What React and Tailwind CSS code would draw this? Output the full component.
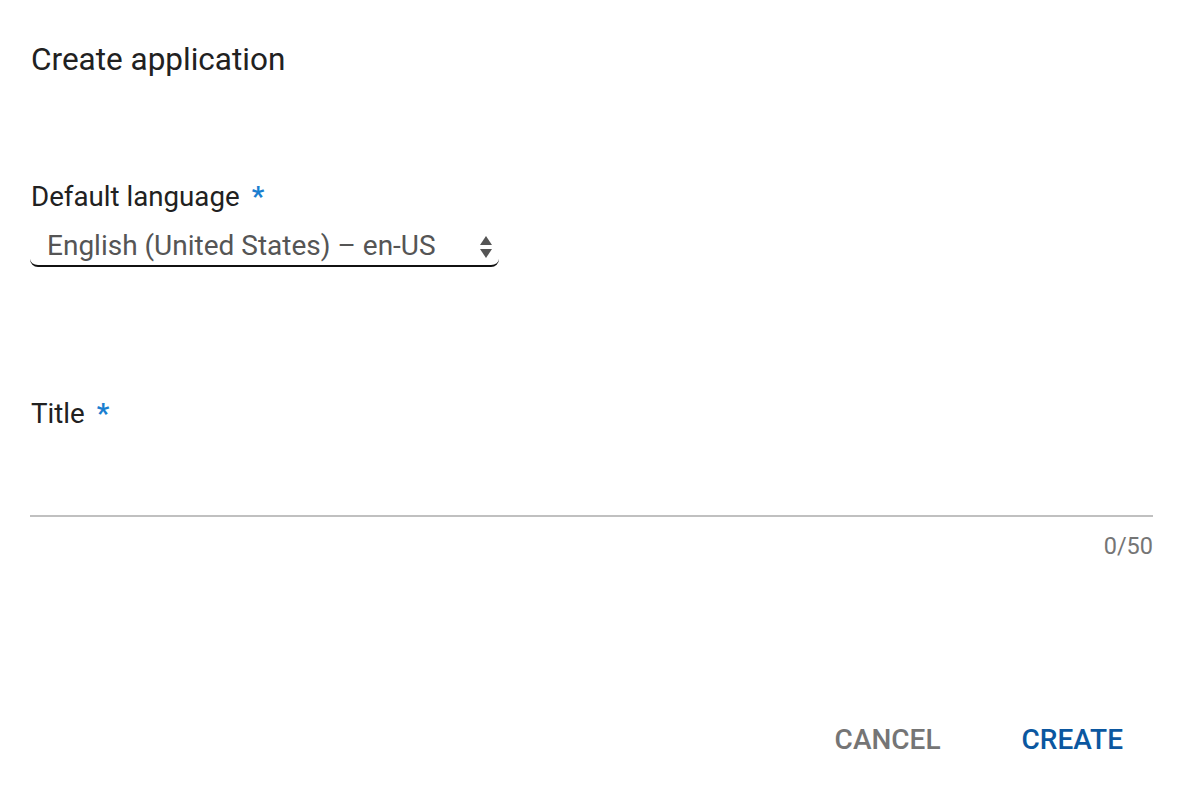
import React from "react";

const Required = () => (
  <span className="ml-[12px] font-bold text-[#1a7fd0]">*</span>
);

export default function App() {
  return (
    <div className="min-h-screen bg-white font-['Roboto',sans-serif] text-[#212121]">
      <div className="pl-[31px] pr-[39px] pt-[42px]">
        <h1 className="text-[31.5px] leading-[36px]">Create application</h1>

        {/* Default language */}
        <div className="mt-[102px] text-[27.7px] leading-[34px]">
          Default language
          <Required />
        </div>
        <div className="mt-[12px] -ml-px flex h-[41px] w-[469px] items-center justify-between rounded-b-[8px] border-b-2 border-[#111] pl-[17px] pr-[6px]">
          <span className="text-[28px] leading-[34px] text-[#555]">
            English (United States) – en-US
          </span>
          <svg width="14" height="24" viewBox="0 0 14 24" className="mt-[2px]">
            <path d="M7 1 L13 10 L1 10 Z" fill="#555" />
            <path d="M1 14 L13 14 L7 23 Z" fill="#555" />
          </svg>
        </div>

        {/* Title */}
        <div className="mt-[130px] text-[27.7px] leading-[34px]">
          Title
          <Required />
        </div>
        <div className="mt-[34px] -ml-px h-[52px] border-b-2 border-[#c0c0c0]"></div>
        <div className="mt-[15px] text-right text-[23.5px] leading-[28px] text-[#757575]">
          0/50
        </div>

        {/* Actions */}
        <div className="mt-[164px] flex justify-end gap-[81px] pr-[30px] text-[28px] font-medium leading-[32px]">
          <button className="text-[#757575]">CANCEL</button>
          <button className="text-[#0b57a0]">CREATE</button>
        </div>
      </div>
    </div>
  );
}
